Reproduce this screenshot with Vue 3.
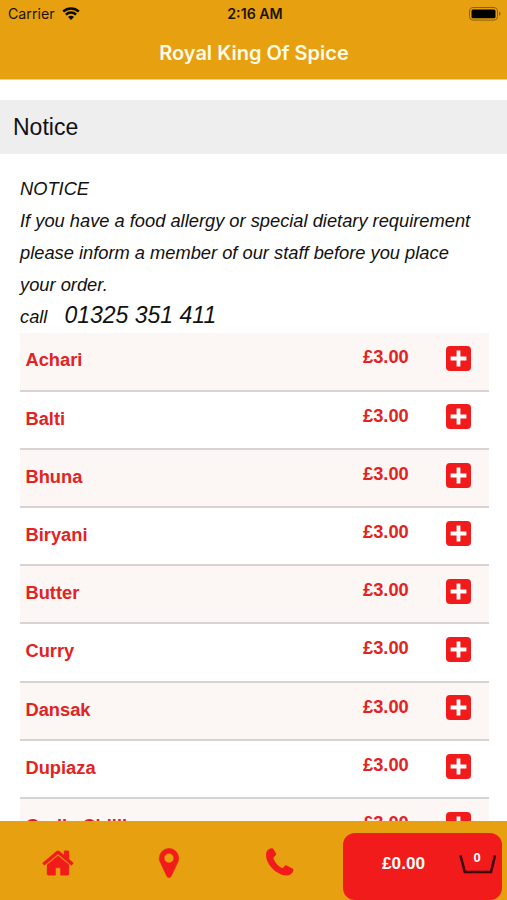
<script setup>
import { ref, computed } from "vue";

const restaurant = "Royal King Of Spice";

const notice = {
  heading: "NOTICE",
  text: "If you have a food allergy or special dietary requirement please inform a member of our staff before you place your order.",
  phone: "01325 351 411"
};

const items = [
  { name: "Achari", price: 3 },
  { name: "Balti", price: 3 },
  { name: "Bhuna", price: 3 },
  { name: "Biryani", price: 3 },
  { name: "Butter", price: 3 },
  { name: "Curry", price: 3 },
  { name: "Dansak", price: 3 },
  { name: "Dupiaza", price: 3 },
  { name: "Garlic Chilli", price: 3 }
];

const basket = ref([]);
const total = computed(() => basket.value.reduce((sum, i) => sum + i.price, 0));

function money(v) {
  return "£" + v.toFixed(2);
}

function add(item) {
  basket.value.push(item);
}
</script>

<template>
  <div class="screen">
    <header class="header">
      <div class="status">
        <div class="carrier">
          <span>Carrier</span>
          <svg class="wifi" viewBox="0 0 18 13">
            <path d="M1.200 4.500C5.600.4 12.400.4 16.800 4.500" />
            <path d="M3.900 7.600C6.800 4.900 11.200 4.900 14.100 7.600" />
            <path class="wifi-dot" d="M9 12.900L6 9.900C7.700 8.200 10.300 8.200 12 9.900Z" />
          </svg>
        </div>
        <span class="time">2:16 AM</span>
        <svg class="battery" viewBox="0 0 32 14">
          <rect class="battery-case" x=".5" y=".5" width="28" height="12.600" rx="3.500" />
          <rect x="2.500" y="2.400" width="24" height="8.800" rx="1.500" />
          <path class="battery-tip" d="M30 4.500q1.500.8 1.500 2.300t-1.500 2.300z" />
        </svg>
      </div>
      <h1 class="title">{{ restaurant }}</h1>
    </header>

    <main class="content">
      <h2 class="section">Notice</h2>
      <div class="notice">
        <p>{{ notice.heading }}</p>
        <p>{{ notice.text }}</p>
        <p class="call">call <span class="phone">{{ notice.phone }}</span></p>
      </div>
      <ul class="menu">
        <li v-for="item in items" :key="item.name" class="item">
          <span class="name">{{ item.name }}</span>
          <span class="price">{{ money(item.price) }}</span>
          <button class="add" @click="add(item)">
            <svg viewBox="0 0 25 25">
              <rect width="25" height="25" rx="4" />
              <path d="M12.500 4.600v15.800M4.600 12.500h15.800" />
            </svg>
          </button>
        </li>
      </ul>
    </main>

    <footer class="tabs">
      <a class="tab">
        <svg class="icon home" viewBox="0 0 1792 1792">
          <path d="M1472 992v480q0 26-19 45t-45 19h-384v-384h-256v384h-384q-26 0-45-19t-19-45v-480q0-1 .5-3t.5-3l575-474 575 474q1 2 1 6zm223-69l-62 74q-8 9-21 11h-3q-13 0-21-7l-692-577-692 577q-12 8-24 7-13-2-21-11l-62-74q-8-10-7-23.500t11-21.500l719-599q32-26 76-26t76 26l244 204v-195q0-14 9-23t23-9h192q14 0 23 9t9 23v408l219 182q10 8 11 21.500t-7 23.500z" />
        </svg>
      </a>
      <a class="tab">
        <svg class="icon pin" viewBox="0 0 1792 1792">
          <path d="M1152 640q0-106-75-181t-181-75-181 75-75 181 75 181 181 75 181-75 75-181zm256 0q0 109-33 179l-364 774q-16 33-47.500 52t-67.500 19-67.500-19-46.500-52l-365-774q-33-70-33-179 0-212 150-362t362-150 362 150 150 362z" />
        </svg>
      </a>
      <a class="tab">
        <svg class="icon handset" viewBox="0 0 28 28">
          <path d="M1.300 2.600Q3.500.1 6.200.3 7.200.5 7.700 1.500L10 5.600Q10.400 6.400 9.700 7.200L7.300 9.800C8 13.400 12.400 18.700 16.500 20.300L18.700 17.900Q19.600 17.100 20.600 17.500L26.500 20.600Q27.700 21.300 27.400 22.500C26.600 25.400 24.200 27.500 20.500 27.500 11 27.500 0 16.500.1 7.300.1 5.500.5 3.700 1.300 2.600Z" />
        </svg>
      </a>
      <button class="cart">
        <span class="total">{{ money(total) }}</span>
        <span class="basket">
          <svg viewBox="0 0 38 20">
            <path d="M1.500 1.500L5.800 18H32L36 1.500" />
          </svg>
          <span class="count">{{ basket.length }}</span>
        </span>
      </button>
    </footer>
  </div>
</template>

<style>
body {
  margin: 0;
  background: #fff;
}
</style>

<style scoped>
.screen {
  display: flex;
  flex-direction: column;
  height: 900px;
  overflow: hidden;
  font-family: "Liberation Sans", Arial, sans-serif;
  color: #111;
  background: #fff;
}
.header {
  flex: none;
  height: 80px;
  background: #e6a010;
  border-bottom: 1px solid #f3d087;
  box-sizing: border-box;
  font-family: Inter, sans-serif;
}
.status {
  display: grid;
  grid-template-columns: 1fr auto 1fr;
  align-items: center;
  height: 27px;
  padding: 0 6px 0 8px;
  font-size: 14.2px;
  color: #1c1403;
}
.carrier {
  display: flex;
  align-items: center;
  gap: 7px;
}
.wifi {
  width: 18px;
  height: 13px;
  fill: none;
  stroke: #0d0a02;
  stroke-width: 2.5;
}
.wifi-dot {
  fill: #0d0a02;
  stroke: none;
}
.time {
  padding-left: 1px;
  font-weight: 600;
}
.battery {
  justify-self: end;
  width: 32px;
  height: 14px;
}
.battery-case {
  fill: none;
  stroke: #8a610b;
}
.battery-tip {
  fill: #8a610b;
}
.title {
  margin: 0;
  padding-left: 1px;
  font-size: 20px;
  font-weight: 600;
  line-height: 52px;
  text-align: center;
  color: #fffbe8;
}
.content {
  flex: 1;
  min-height: 0;
  overflow: hidden;
  padding-top: 20px;
}
.section {
  margin: 0;
  padding-left: 13px;
  font-size: 23px;
  font-weight: 400;
  line-height: 54px;
  background: #eee;
}
.notice {
  padding: 19px 18px 0 20px;
  font-size: 18.3px;
  font-style: italic;
  line-height: 32px;
}
.notice p {
  margin: 0;
}
.notice .call {
  display: flex;
  align-items: baseline;
  gap: 17px;
  height: 32.4px;
  line-height: 29px;
}
.phone {
  font-size: 23px;
}
.menu {
  margin: 0 18px 0 20px;
  padding: 0;
  list-style: none;
}
.item {
  display: flex;
  align-items: flex-start;
  height: 58.2px;
  padding: 0 18px 0 5.5px;
  box-sizing: border-box;
  border-bottom: 2px solid #d5d3d3;
  font-size: 18.3px;
  font-weight: 700;
  color: #e32222;
}
.item:nth-child(odd) {
  background: #fcf6f5;
}
.name {
  flex: 1;
  line-height: 54px;
}
.price {
  width: 83px;
  line-height: 47.6px;
}
.add {
  width: 25px;
  height: 25px;
  margin-top: 12.8px;
  padding: 0;
  border: 0;
  background: none;
}
.add svg {
  display: block;
  fill: #f21b1b;
  stroke: none;
}
.add path {
  stroke: #fff;
  stroke-width: 3.8;
}
.tabs {
  flex: none;
  display: flex;
  height: 79px;
  padding: 0 5px 0 3px;
  background: #e6a010;
}
.tab {
  flex: 1;
  display: flex;
  justify-content: center;
  padding-top: 25px;
}
.icon {
  width: 34px;
  height: 34px;
  fill: #f21b1b;
  stroke: #f21b1b;
  stroke-width: 0;
}
.home {
  stroke-width: 20;
}
.pin {
  stroke-width: 30;
}
.handset {
  width: 28px;
  height: 28px;
  margin-top: 2px;
}
.cart {
  display: flex;
  width: 159px;
  height: 67px;
  margin: 12px 0 0 8px;
  padding: 0 5px 0 39px;
  border: 0;
  border-radius: 12px;
  background: #f21b1b;
  font-family: inherit;
  font-weight: 700;
  color: #fff;
}
.total {
  flex: 1;
  font-size: 17.2px;
  line-height: 61px;
  text-align: left;
}
.basket {
  position: relative;
  width: 38px;
  height: 20px;
  margin-top: 21px;
}
.basket svg {
  display: block;
  fill: none;
  stroke: #3f0707;
  stroke-width: 2.6;
}
.count {
  position: absolute;
  top: -5px;
  left: -1px;
  width: 100%;
  font-size: 13px;
  line-height: 18px;
  text-align: center;
}
</style>
